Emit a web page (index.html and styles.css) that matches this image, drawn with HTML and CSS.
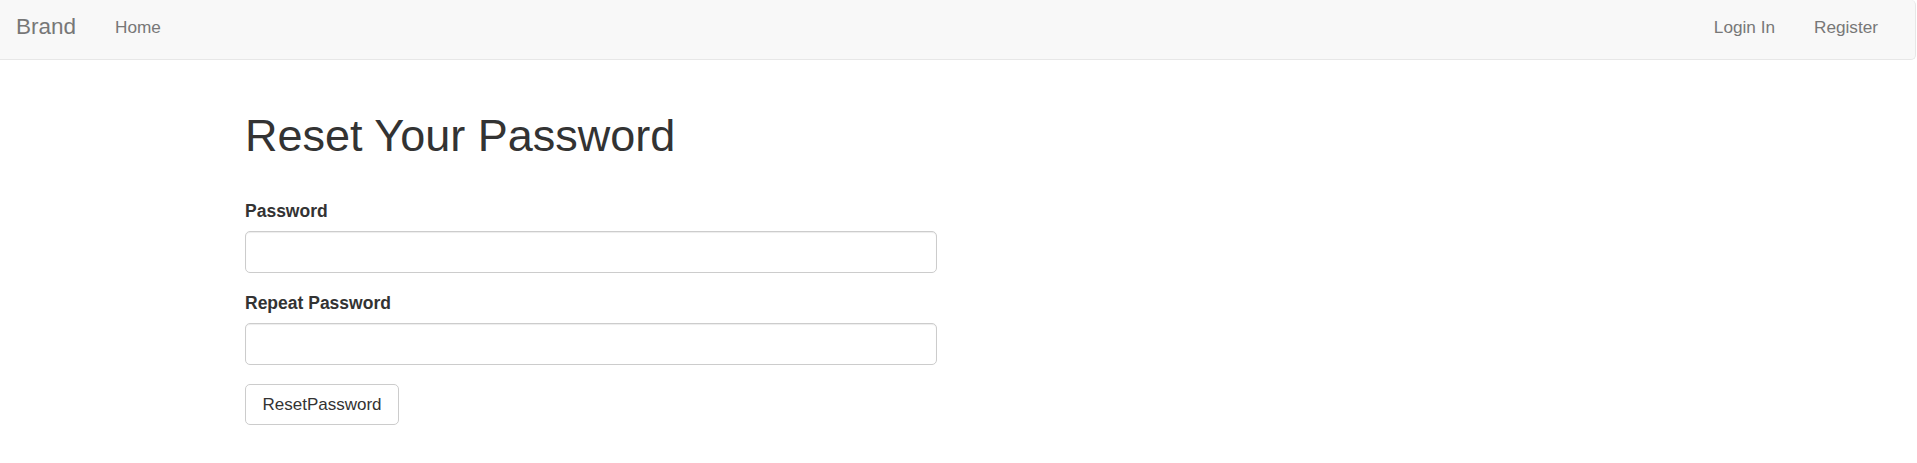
FILE: index.html
```html
<!DOCTYPE html>
<html lang="en">
<head>
<meta charset="utf-8">
<title>Reset Your Password</title>
<link rel="stylesheet" href="styles.css">
</head>
<body>
<nav class="navbar">
  <div class="nav-left">
    <a class="brand" href="#">Brand</a>
    <a class="nav-link" href="#">Home</a>
  </div>
  <div class="nav-right">
    <a class="nav-link" href="#">Login In</a>
    <a class="nav-link" href="#">Register</a>
  </div>
</nav>
<main class="content">
  <h1 class="title">Reset Your Password</h1>
  <form class="form">
    <div class="form-group">
      <label class="label" for="pw">Password</label>
      <input class="input" id="pw" type="password">
    </div>
    <div class="form-group form-group-last">
      <label class="label" for="pw2">Repeat Password</label>
      <input class="input" id="pw2" type="password">
    </div>
    <button class="btn" type="button">ResetPassword</button>
  </form>
</main>
</body>
</html>
```

FILE: styles.css
```css
html, body {
  margin: 0;
  padding: 0;
  background: #fff;
}
body {
  font-family: "Liberation Sans", Arial, Helvetica, sans-serif;
  color: #333;
}
.navbar {
  box-sizing: border-box;
  width: 1916px;
  height: 60px;
  background: #f8f8f8;
  border-bottom: 1px solid #e7e7e7;
  border-right: 1px solid #e7e7e7;
  border-radius: 0 5px 5px 0;
  display: flex;
  justify-content: space-between;
  align-items: flex-start;
  padding: 15px 18px 0 16px;
}
.nav-left, .nav-right {
  display: flex;
  align-items: flex-start;
}
.brand {
  font-size: 22.5px;
  line-height: 24px;
  color: #777;
  text-decoration: none;
  padding-right: 19px;
}
.nav-link {
  font-size: 17.2px;
  line-height: 24px;
  color: #777;
  text-decoration: none;
  padding: 0 19.5px;
}
.nav-left .nav-link {
  padding: 0 20px;
}
.nav-right .nav-link:last-child {
  padding-right: 19px;
}
.content {
  margin-left: 245px;
  width: 692px;
}
.title {
  margin: 51px 0 0;
  font-size: 45px;
  line-height: 50px;
  font-weight: 400;
  color: #333;
}
.form {
  margin-top: 40px;
}
.form-group {
  margin-bottom: 20.5px;
}
.form-group-last {
  margin-bottom: 19.5px;
}
.label {
  display: block;
  font-size: 17.5px;
  line-height: 20px;
  font-weight: 700;
  color: #333;
  margin-bottom: 9.5px;
}
.input {
  display: block;
  box-sizing: border-box;
  width: 692px;
  height: 42px;
  border: 1px solid #ccc;
  border-radius: 5px;
  box-shadow: inset 0 1px 1px rgba(0, 0, 0, 0.075);
  background: #fff;
  margin: 0;
  padding: 0 14px;
  font-family: inherit;
  font-size: 17px;
}
.btn {
  box-sizing: border-box;
  height: 41px;
  padding: 0 16.5px;
  border: 1px solid #ccc;
  border-radius: 5px;
  background: #fff;
  color: #333;
  font-family: inherit;
  font-size: 17px;
  line-height: 24px;
}
```
